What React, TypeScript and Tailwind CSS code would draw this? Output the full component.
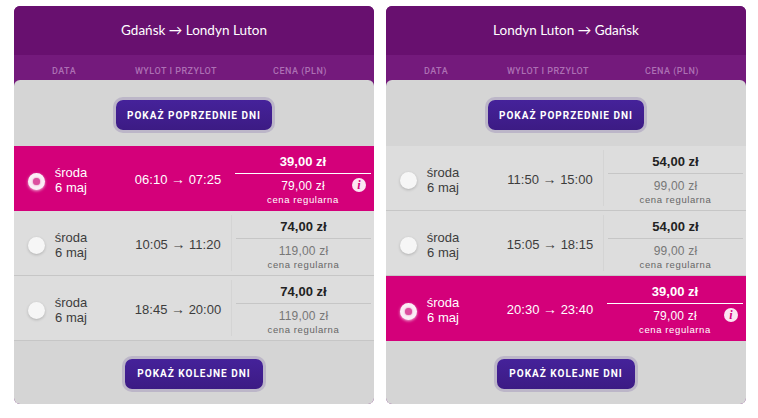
type Flight = { dep: string; arr: string; price: string; regular: string; selected?: boolean };

const outbound: Flight[] = [
  { dep: '06:10', arr: '07:25', price: '39,00 zł', regular: '79,00 zł', selected: true },
  { dep: '10:05', arr: '11:20', price: '74,00 zł', regular: '119,00 zł' },
  { dep: '18:45', arr: '20:00', price: '74,00 zł', regular: '119,00 zł' },
];

const inbound: Flight[] = [
  { dep: '11:50', arr: '15:00', price: '54,00 zł', regular: '99,00 zł' },
  { dep: '15:05', arr: '18:15', price: '54,00 zł', regular: '99,00 zł' },
  { dep: '20:30', arr: '23:40', price: '39,00 zł', regular: '79,00 zł', selected: true },
];

function ShowButton({ label, width }: { label: string; width: string }) {
  return (
    <button
      className={`${width} h-[30px] rounded-[7px] bg-gradient-to-b from-[#45229a] to-[#3c1b84] text-center font-['Roboto',sans-serif] text-[10px] font-bold tracking-[1px] text-white shadow-[0_0_0_3px_#bcb6c8]`}
    >
      {label}
    </button>
  );
}

function Row({ flight }: { flight: Flight }) {
  const sel = flight.selected;
  return (
    <div className={`flex h-[65px] ${sel ? 'bg-[#d4007a] text-white' : 'border-b border-[#c6c6c6] bg-[#dddddd] text-[#3c3c3c]'}`}>
      <div className="flex w-[217px] shrink-0 items-center pt-[3px]">
        <div className="ml-[14px] mt-[2px] w-[17px] shrink-0">
          {sel ? (
            <div className="flex h-[17px] w-[17px] items-center justify-center rounded-full bg-[#fbeef6] shadow-[0_1px_3px_rgba(255,255,255,0.7)]">
              <div className="h-[7px] w-[7px] rounded-full bg-[#dc4f9f] shadow-[0_0_2px_#dc4f9f]" />
            </div>
          ) : (
            <div className="h-[17px] w-[17px] rounded-full bg-[#f6f6f6] shadow-[0_1px_3px_rgba(0,0,0,0.2)]" />
          )}
        </div>
        <div className="ml-[9px] w-[34px] shrink-0 text-center text-[13px] leading-[15px]">
          <div>środa</div>
          <div>6 maj</div>
        </div>
        <div className="ml-[34px] w-[112px] shrink-0 whitespace-nowrap text-center text-[13px]">
          {flight.dep} <span className="text-[14px] leading-none">→</span> {flight.arr}
        </div>
      </div>
      <div className="relative w-[143px] py-[4px]">
        <div className={`flex h-full flex-col items-center pl-[4px] pr-[3px] ${sel ? '' : 'border-l border-[#d4d4d4]'}`}>
          <div className={`flex h-[24px] w-full items-center justify-center border-b text-[13px] font-bold ${sel ? 'border-white text-white' : 'border-[#c6c6c6] text-[#222222]'}`}>
            {flight.price}
          </div>
          <div className={`mt-[5px] text-[12px] leading-[14px] tracking-[0.2px] ${sel ? 'text-white' : 'text-[#777777]'}`}>{flight.regular}</div>
          <div className={`text-[9.5px] leading-[13px] tracking-[0.6px] ${sel ? 'text-white' : 'text-[#666666]'}`}>cena regularna</div>
        </div>
        {sel && (
          <div className="absolute right-[8px] top-[32px] flex h-[14px] w-[14px] items-center justify-center rounded-full bg-[#fbe6f2] font-['Liberation_Serif',serif] text-[12px] font-bold italic text-[#d4007a]">
            i
          </div>
        )}
      </div>
    </div>
  );
}

function Panel({ title, flights }: { title: string; flights: Flight[] }) {
  return (
    <div className="w-[360px] overflow-hidden rounded-[6px] bg-[#741a7c]">
      <div className="flex h-[49px] items-center justify-center bg-[#68106f] font-['Lato',sans-serif] text-[13.5px] text-white">
        {title}
      </div>
      <div className="flex h-[25px] items-center pt-[8px] font-['Roboto',sans-serif] text-[9px] font-medium tracking-[0.5px] text-[#ad70b4]">
        <div className="ml-[25px] w-[50px] text-center">DATA</div>
        <div className="ml-[42px] w-[90px] text-center">WYLOT I PRZYLOT</div>
        <div className="ml-[44px] w-[70px] text-center">CENA (PLN)</div>
      </div>
      <div className="rounded-t-[6px] bg-[#d5d5d5]">
        <div className="flex h-[66px] items-center justify-center pt-[4px]">
          <ShowButton label="POKAŻ POPRZEDNIE DNI" width="w-[156px]" />
        </div>
        {flights.map((f) => (
          <Row key={f.dep} flight={f} />
        ))}
        <div className="flex h-[63px] items-center justify-center pt-[2px]">
          <ShowButton label="POKAŻ KOLEJNE DNI" width="w-[138px]" />
        </div>
      </div>
    </div>
  );
}

export default function App() {
  return (
    <div className="flex h-[418px] w-[758px] items-start gap-[12px] bg-white pl-[14px] pt-[6px] font-['Liberation_Sans',sans-serif]">
      <Panel title="Gdańsk → Londyn Luton" flights={outbound} />
      <Panel title="Londyn Luton → Gdańsk" flights={inbound} />
    </div>
  );
}
